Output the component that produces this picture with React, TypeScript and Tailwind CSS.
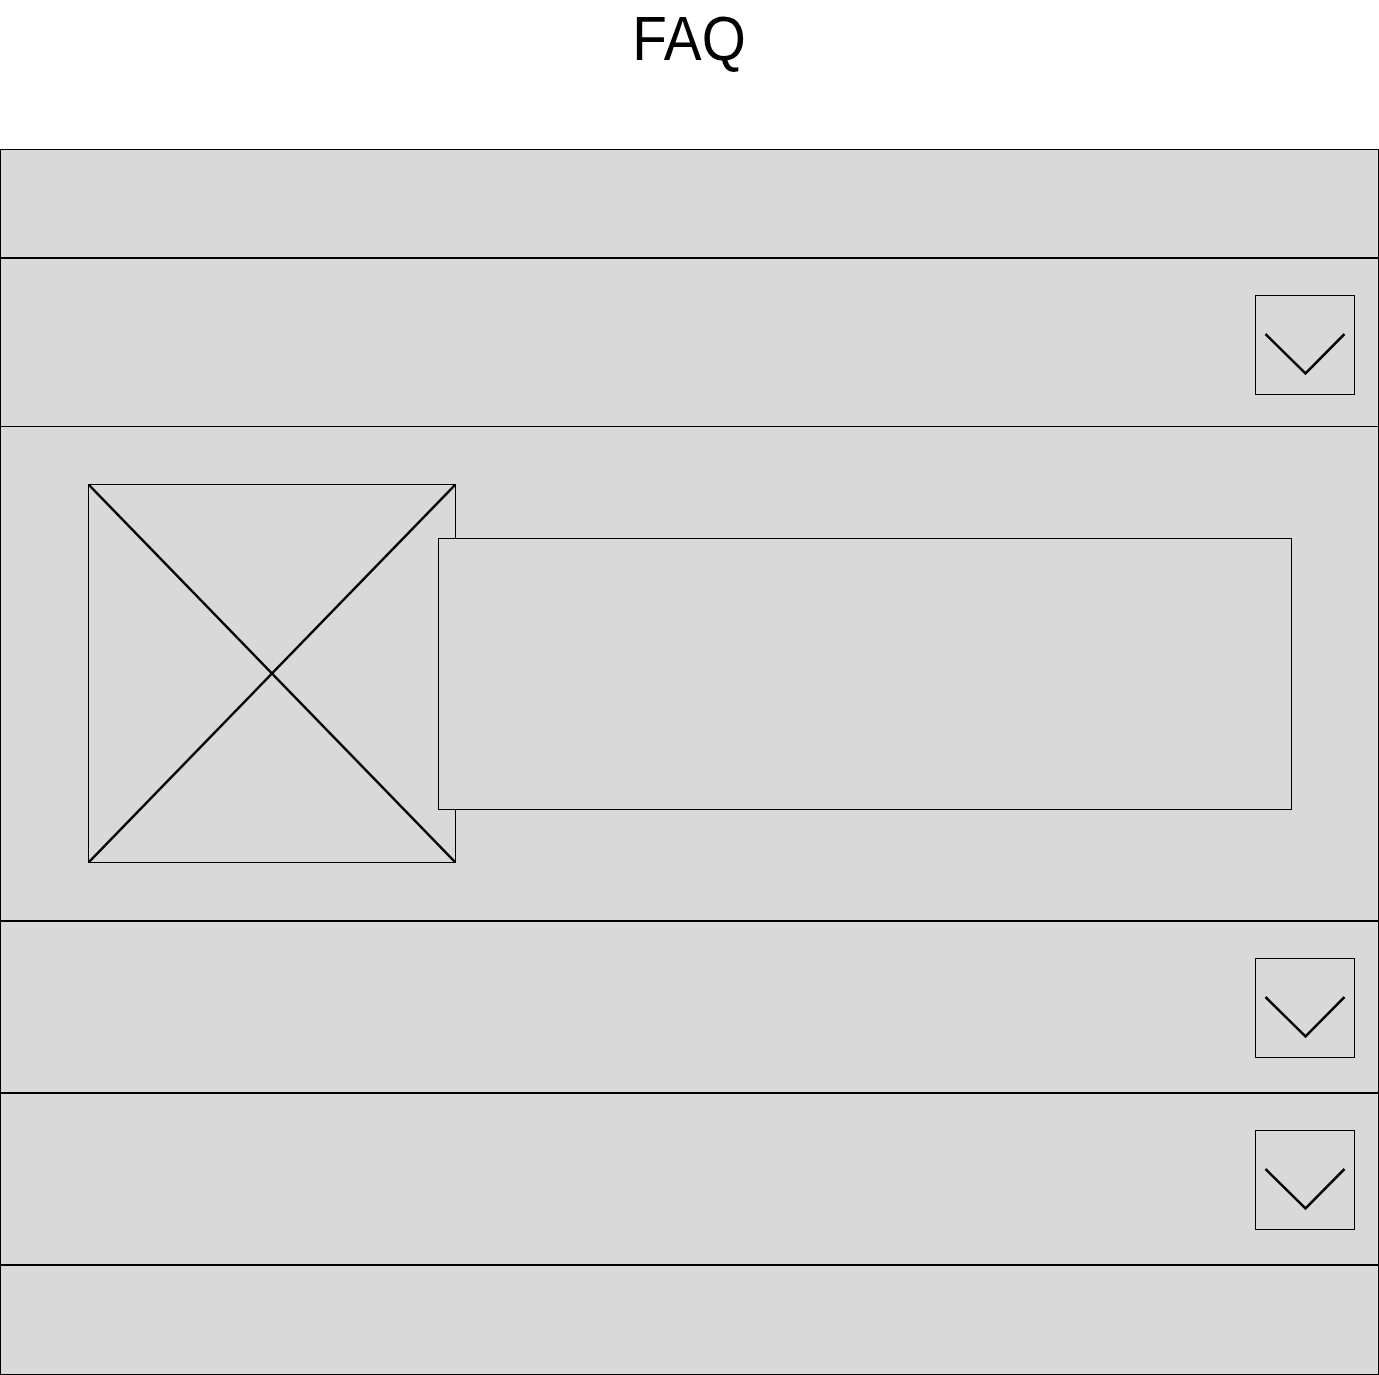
import type { ReactNode } from "react";

function Chevron() {
  return (
    <div className="relative h-[100px] w-[100px] border border-black">
      <svg
        className="absolute left-[-1px] top-[-1px]"
        width="100"
        height="100"
        viewBox="0 0 100 100"
        fill="none"
      >
        <polyline
          points="10.5,39 50.5,78.5 89.5,39"
          stroke="#000"
          strokeWidth="2.5"
        />
      </svg>
    </div>
  );
}

function FaqRow({ height, chevron }: { height: string; chevron?: boolean }) {
  return (
    <div className={`flex justify-end border border-black pr-[23px] pt-[36px] ${height}`}>
      {chevron && <Chevron />}
    </div>
  );
}

function ImagePlaceholder() {
  return (
    <div className="relative h-[379px] w-[368px] shrink-0 border border-black">
      <svg
        className="absolute left-[-1px] top-[-1px]"
        width="368"
        height="379"
        viewBox="0 0 368 379"
        fill="none"
      >
        <line x1="0.5" y1="0.5" x2="367.5" y2="378.5" stroke="#000" strokeWidth="2.5" />
        <line x1="367.5" y1="0.5" x2="0.5" y2="378.5" stroke="#000" strokeWidth="2.5" />
      </svg>
    </div>
  );
}

function ExpandedRow({ children }: { children: ReactNode }) {
  return (
    <div className="border border-black">
      <div className="flex h-[167px] justify-end pr-[23px] pt-[36px]">
        <Chevron />
      </div>
      <div className="h-[494px] border-t border-black pl-[87px] pt-[57px]">{children}</div>
    </div>
  );
}

export default function App() {
  return (
    <div className="min-h-[1375px] w-[1379px] bg-white font-['Liberation_Sans',sans-serif] text-black">
      <div className="flex h-[149px] justify-center pt-[7px]">
        <h1 className="inline-block origin-center scale-x-[0.9] text-[63px] font-normal leading-none">
          FAQ
        </h1>
      </div>

      <div className="flex flex-col bg-[#d9d9d9]">
        <FaqRow height="h-[109px]" />
        <ExpandedRow>
          <div className="flex items-start">
            <ImagePlaceholder />
            <div className="relative z-10 ml-[-18px] mt-[54px] h-[272px] w-[854px] border border-black bg-[#d9d9d9]" />
          </div>
        </ExpandedRow>
        <FaqRow height="h-[172px]" chevron />
        <FaqRow height="h-[172px]" chevron />
        <FaqRow height="h-[110px]" />
      </div>
    </div>
  );
}
